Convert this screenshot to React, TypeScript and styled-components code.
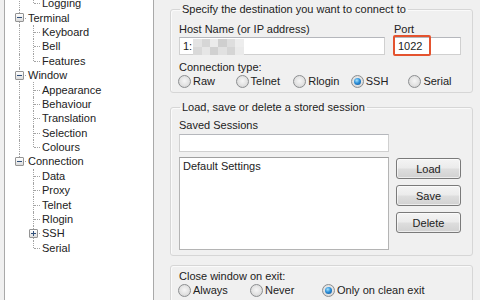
import React from "react";
import styled, { createGlobalStyle, css } from "styled-components";

const Global = createGlobalStyle`
  html, body { margin: 0; padding: 0; background: #f0f0f0; }
  body { font-family: "Liberation Sans", Arial, sans-serif; font-size: 11px; color: #1c1c1c; }
  * { box-sizing: border-box; }
`;

const Frame = styled.div`
  display: flex;
  width: 480px;
  height: 300px;
  overflow: hidden;
  background: #f0f0f0;
`;

/* ---------- Category tree ---------- */
const TreePane = styled.aside`
  width: 154px;
  flex-shrink: 0;
  padding-left: 4px;
`;

const TreeBox = styled.div`
  margin-top: -6px;
  height: 320px;
  background: #fff;
  border: 1px solid #a9a9a9;
  padding-left: 7px;
  padding-top: 1px;
`;

const Row = styled.div`
  display: flex;
  align-items: center;
  height: 14.4px;
  white-space: nowrap;
`;

type Kind = "pipe" | "tee" | "elbow" | "blank";

const Cell = styled.span<{ $kind: Kind }>`
  position: relative;
  width: 14px;
  height: 100%;
  flex-shrink: 0;
  &::before {
    content: "";
    position: absolute;
    left: 7px;
    top: 0;
    border-left: 1px dotted #a3a3a3;
    height: ${(p) => (p.$kind === "elbow" ? "50%" : "100%")};
    display: ${(p) => (p.$kind === "blank" ? "none" : "block")};
  }
  &::after {
    content: "";
    position: absolute;
    left: 8px;
    right: 0;
    top: 50%;
    border-top: 1px dotted #a3a3a3;
    display: ${(p) => (p.$kind === "tee" || p.$kind === "elbow" ? "block" : "none")};
  }
`;

const Expander = styled.span<{ $plus?: boolean }>`
  position: absolute;
  z-index: 1;
  left: 3px;
  top: 50%;
  width: 9px;
  height: 9px;
  margin-top: -4.5px;
  border: 1px solid #949494;
  border-radius: 1px;
  background: linear-gradient(#ffffff, #dcdcdc);
  &::before {
    content: "";
    position: absolute;
    left: 1px;
    top: 3px;
    width: 5px;
    height: 1px;
    background: #2f4f7a;
  }
  ${(p) =>
    p.$plus &&
    css`
      &::after {
        content: "";
        position: absolute;
        left: 3px;
        top: 1px;
        width: 1px;
        height: 5px;
        background: #2f4f7a;
      }
    `}
`;

const NodeLabel = styled.span`
  padding-left: 2px;
  color: #222;
`;

interface TreeNode {
  label: string;
  cells: Kind[];
  box?: "minus" | "plus";
}

const tree: TreeNode[] = [
  { label: "Logging", cells: ["pipe", "elbow"] },
  { label: "Terminal", cells: ["tee"], box: "minus" },
  { label: "Keyboard", cells: ["pipe", "tee"] },
  { label: "Bell", cells: ["pipe", "tee"] },
  { label: "Features", cells: ["pipe", "elbow"] },
  { label: "Window", cells: ["tee"], box: "minus" },
  { label: "Appearance", cells: ["pipe", "tee"] },
  { label: "Behaviour", cells: ["pipe", "tee"] },
  { label: "Translation", cells: ["pipe", "tee"] },
  { label: "Selection", cells: ["pipe", "tee"] },
  { label: "Colours", cells: ["pipe", "elbow"] },
  { label: "Connection", cells: ["elbow"], box: "minus" },
  { label: "Data", cells: ["blank", "tee"] },
  { label: "Proxy", cells: ["blank", "tee"] },
  { label: "Telnet", cells: ["blank", "tee"] },
  { label: "Rlogin", cells: ["blank", "tee"] },
  { label: "SSH", cells: ["blank", "tee"], box: "plus" },
  { label: "Serial", cells: ["blank", "elbow"] },
];

/* ---------- Right side ---------- */
const Main = styled.main`
  flex: 1;
  min-width: 0;
  padding: 3px 7px 0 16px;
  display: flex;
  flex-direction: column;
`;

const Group = styled.fieldset<{ $h: number; $mt?: number; $pt?: number }>`
  margin: ${(p) => p.$mt ?? 0}px 0 0;
  padding: ${(p) => p.$pt ?? 0}px 0 0 8px;
  height: ${(p) => p.$h}px;
  flex-shrink: 0;
  border: 1px solid #d6d6d6;
  border-radius: 3px;
  box-shadow: inset 1px 1px 0 #fafafa;
  min-width: 0;
`;

const Legend = styled.legend`
  margin-left: 1px;
  padding: 0 2px;
  line-height: 12px;
  color: #222;
`;

const Label = styled.div<{ $mt: number }>`
  margin-top: ${(p) => p.$mt}px;
  line-height: 12px;
  height: 12px;
  color: #222;
`;

const HostGrid = styled.div`
  display: grid;
  grid-template-columns: 206px 67px;
  column-gap: 9px;
  margin-top: 8px;
`;

const Field = styled.div<{ $w?: number; $h?: number }>`
  position: relative;
  width: ${(p) => (p.$w ? `${p.$w}px` : "auto")};
  height: ${(p) => p.$h ?? 18}px;
  background: #fff;
  border: 1px solid #d0d0d0;
  border-top-color: #b5b7bc;
  padding: 2px 3px;
  line-height: 12px;
  display: flex;
  align-items: flex-start;
  white-space: nowrap;
`;

const Mosaic = styled.span`
  display: grid;
  grid-template-columns: repeat(6, 8.4px);
  grid-template-rows: 8px 8px;
  margin-top: -1px;
  margin-left: 1px;
`;

const Tile = styled.span<{ $c: string }>`
  background: ${(p) => p.$c};
`;

const Highlight = styled.span`
  position: absolute;
  left: -2px;
  top: -3px;
  width: 38px;
  height: 21px;
  border: 2px solid #e4532f;
  border-radius: 2px;
`;

const RadioRow = styled.div<{ $col: number; $mt: number }>`
  display: grid;
  grid-template-columns: repeat(auto-fill, ${(p) => p.$col}px);
  margin-top: ${(p) => p.$mt}px;
  margin-left: -1px;
  height: 14px;
`;

const RadioItem = styled.label`
  display: flex;
  align-items: center;
  gap: 2px;
  white-space: nowrap;
  color: #222;
`;

const RadioDot = styled.span<{ $on?: boolean }>`
  position: relative;
  width: 13px;
  height: 13px;
  flex-shrink: 0;
  border-radius: 50%;
  border: 1px solid #8c8e90;
  background: radial-gradient(circle at 50% 45%, #f6f6f6 0%, #e2e2e2 55%, #c9c9c9 100%);
  ${(p) =>
    p.$on &&
    css`
      &::after {
        content: "";
        position: absolute;
        left: 2px;
        top: 2px;
        width: 7px;
        height: 7px;
        border-radius: 50%;
        background: radial-gradient(circle at 40% 35%, #a8e4ff 0%, #2c8fd8 45%, #0b4c90 100%);
      }
    `}
`;

const SessionArea = styled.div`
  display: flex;
  gap: 7px;
  margin-top: 5px;
`;

const ListBox = styled.div`
  width: 210px;
  height: 93px;
  background: #fff;
  border: 1px solid #b4b4b4;
  border-top-color: #9f9f9f;
  padding: 2px 3px;
  line-height: 12px;
  color: #222;
`;

const ButtonCol = styled.div`
  display: flex;
  flex-direction: column;
  gap: 6px;
  margin-top: 1px;
`;

const Button = styled.button`
  width: 65px;
  height: 21px;
  padding: 0;
  font: inherit;
  color: #222;
  border: 1px solid #7a7a7a;
  border-radius: 3px;
  background: linear-gradient(#f4f4f4 0%, #ebebeb 48%, #dedede 52%, #d1d1d1 100%);
  box-shadow: inset 0 0 0 1px rgba(255, 255, 255, 0.6);
`;

const mosaic = [
  "#e3e3e3", "#d6d6d6", "#ebebeb", "#cfcfcf", "#dedede", "#ededed",
  "#d9d9d9", "#e6e6e6", "#d1d1d1", "#e1e1e1", "#d5d5d5", "#eaeaea",
];

function Radio({ label, on }: { label: string; on?: boolean }) {
  return (
    <RadioItem>
      <RadioDot $on={on} />
      <span>{label}</span>
    </RadioItem>
  );
}

export default function App() {
  return (
    <>
      <Global />
      <Frame>
        <TreePane>
          <TreeBox>
            {tree.map((n) => (
              <Row key={n.label}>
                {n.cells.map((k, i) => (
                  <Cell key={i} $kind={k}>
                    {n.box && i === n.cells.length - 1 && <Expander $plus={n.box === "plus"} />}
                  </Cell>
                ))}
                <NodeLabel>{n.label}</NodeLabel>
              </Row>
            ))}
          </TreeBox>
        </TreePane>

        <Main>
          <Group $h={90}>
            <Legend>Specify the destination you want to connect to</Legend>
            <HostGrid>
              <Label $mt={0}>Host Name (or IP address)</Label>
              <Label $mt={0}>Port</Label>
              <Field style={{ marginTop: 2 }}>
                <span>1:</span>
                <Mosaic>
                  {mosaic.map((c, i) => (
                    <Tile key={i} $c={c} />
                  ))}
                </Mosaic>
              </Field>
              <Field style={{ marginTop: 2 }}>
                <span>1022</span>
                <Highlight />
              </Field>
            </HostGrid>
            <Label $mt={6}>Connection type:</Label>
            <RadioRow $col={57.6} $mt={1}>
              <Radio label="Raw" />
              <Radio label="Telnet" />
              <Radio label="Rlogin" />
              <Radio label="SSH" on />
              <Radio label="Serial" />
            </RadioRow>
          </Group>

          <Group $h={155} $mt={8}>
            <Legend>Load, save or delete a stored session</Legend>
            <Label $mt={6}>Saved Sessions</Label>
            <Field $w={210} style={{ marginTop: 3 }} />
            <SessionArea>
              <ListBox>Default Settings</ListBox>
              <ButtonCol>
                <Button>Load</Button>
                <Button>Save</Button>
                <Button>Delete</Button>
              </ButtonCol>
            </SessionArea>
          </Group>

          <Group $h={60} $mt={9} $pt={4}>
            <Label $mt={0}>Close window on exit:</Label>
            <RadioRow $col={72} $mt={1}>
              <Radio label="Always" />
              <Radio label="Never" />
              <Radio label="Only on clean exit" on />
            </RadioRow>
          </Group>
        </Main>
      </Frame>
    </>
  );
}
